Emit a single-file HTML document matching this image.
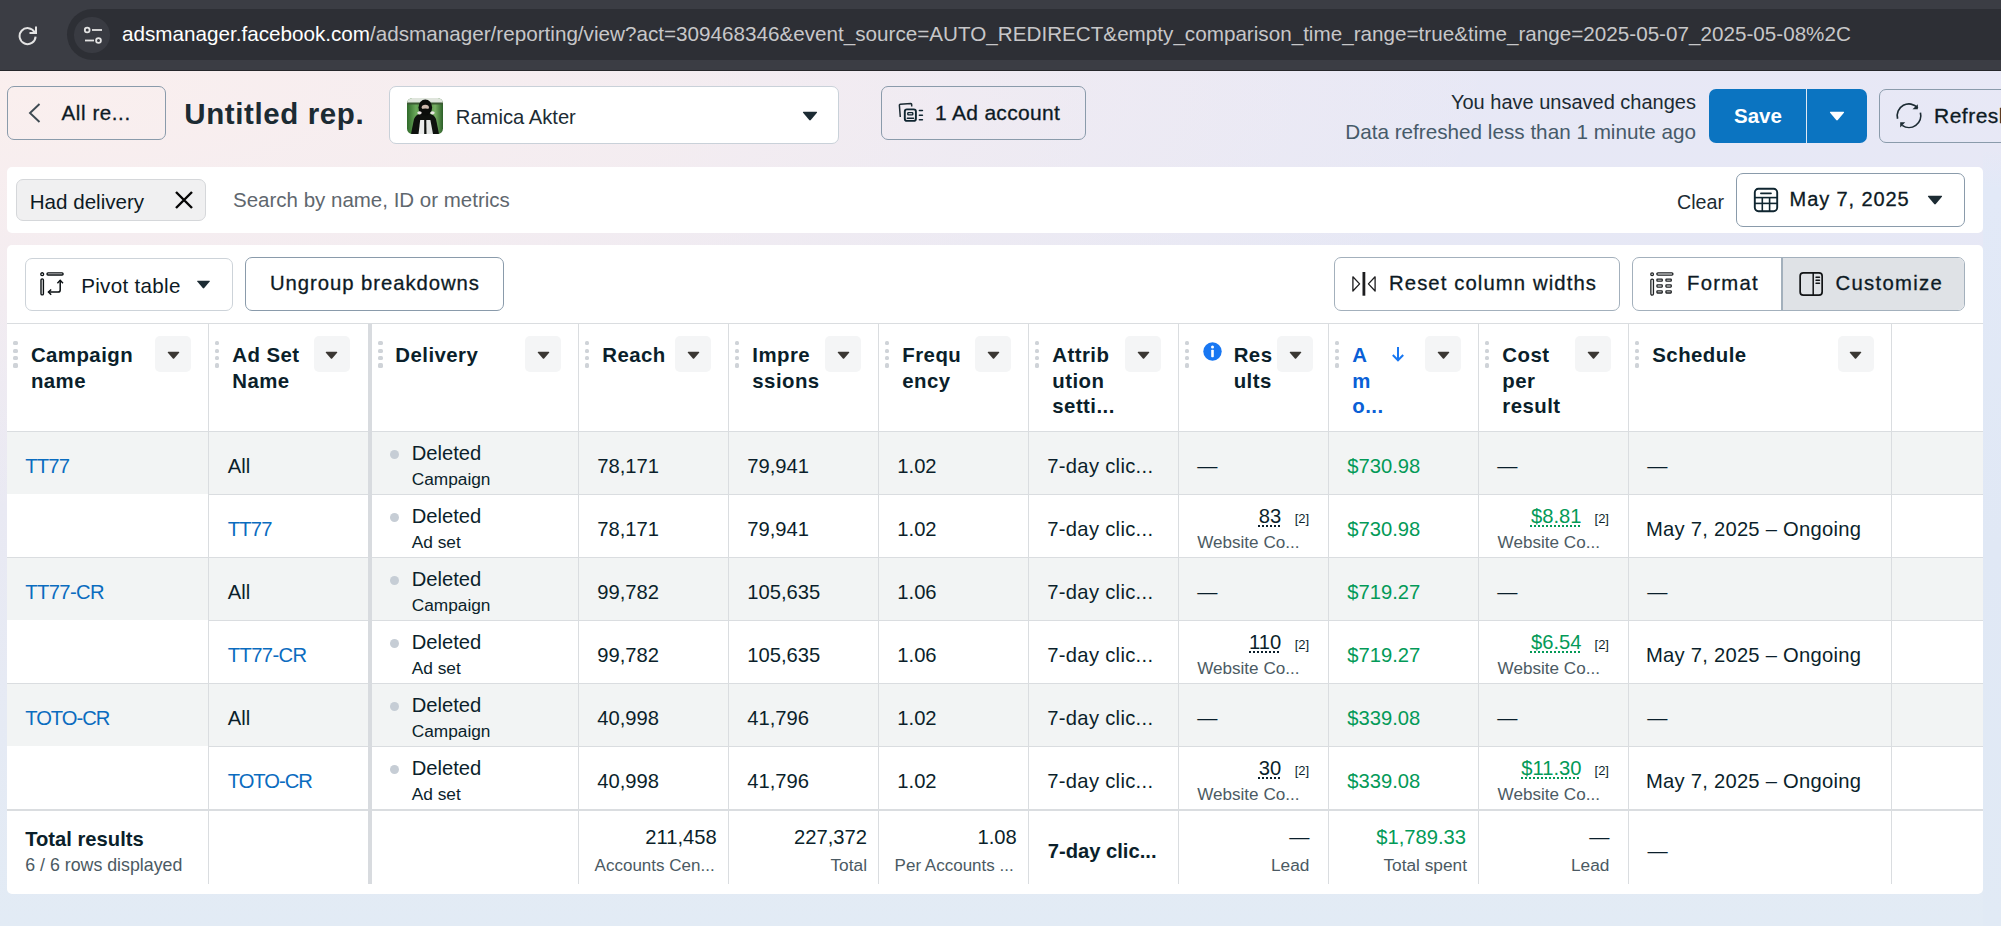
<!DOCTYPE html><html><head><meta charset="utf-8"><style>
html,body{margin:0;padding:0;width:2001px;height:926px;overflow:hidden;}
body{position:relative;font-family:"Liberation Sans",sans-serif;
background:
 radial-gradient(ellipse 1500px 420px at 0px 90px, rgba(250,239,238,1) 0%, rgba(248,238,239,0.75) 45%, rgba(246,237,240,0) 100%),
 linear-gradient(180deg, #e8e8f6 0px, #e6e8f5 300px, #e9e9f3 500px, #e2ebf5 926px);}
</style></head><body>
<div style="position:absolute;left:0px;top:0px;width:2001px;height:71px;box-sizing:border-box;background:#3b3d44;"></div>
<div style="position:absolute;left:0px;top:70px;width:2001px;height:1px;box-sizing:border-box;background:#26272b;"></div>
<div style="position:absolute;left:67px;top:9px;width:2001px;height:51px;box-sizing:border-box;background:#2d2f35;border-radius:26px;"></div>
<div style="position:absolute;left:74.3px;top:17px;width:35.5px;height:35.5px;box-sizing:border-box;background:#393b42;border-radius:50%;"></div>
<svg style="position:absolute;left:17px;top:24px" width="22" height="22" viewBox="0 0 22 22"><path d="M17.6 8.2 A8 8 0 1 0 18.6 12.6" fill="none" stroke="#e3e3e3" stroke-width="2"/><path d="M19 2.5 V9 H12.5" fill="none" stroke="#e3e3e3" stroke-width="2"/></svg>
<svg style="position:absolute;left:82.5px;top:25px" width="22" height="22" viewBox="0 0 22 22"><circle cx="4.2" cy="5" r="2.4" fill="none" stroke="#e3e3e3" stroke-width="1.8"/><line x1="9" y1="5" x2="19" y2="5" stroke="#e3e3e3" stroke-width="1.8"/><circle cx="15.5" cy="15.5" r="2.4" fill="none" stroke="#e3e3e3" stroke-width="1.8"/><line x1="2" y1="15.5" x2="11" y2="15.5" stroke="#e3e3e3" stroke-width="1.8"/></svg>
<div style="position:absolute;left:122px;top:21.04px;font-size:20.66px;line-height:26px;font-weight:400;color:#c7c7c9;white-space:nowrap;"><span style="color:#ffffff">adsmanager.facebook.com</span>/adsmanager/reporting/view?act=309468346&amp;event_source=AUTO_REDIRECT&amp;empty_comparison_time_range=true&amp;time_range=2025-05-07_2025-05-08%2C</div>
<div style="position:absolute;left:7px;top:86px;width:159px;height:54px;box-sizing:border-box;border:1px solid #8a9bab;border-radius:7px;"></div>
<svg style="position:absolute;left:27px;top:102px" width="16" height="22" viewBox="0 0 16 22"><polyline points="12.5,2 3,11 12.5,20" fill="none" stroke="#3e4a52" stroke-width="1.9"/></svg>
<div style="position:absolute;left:61.5px;top:99.90px;font-size:20.5px;line-height:26px;font-weight:400;color:#0d1a24;white-space:nowrap;letter-spacing:0.6px;-webkit-text-stroke:0.3px #0d1a24;">All re...</div>
<div style="position:absolute;left:184.3px;top:95.28px;font-size:29.5px;line-height:37px;font-weight:700;color:#1c2b33;white-space:nowrap;letter-spacing:0.6px;">Untitled rep.</div>
<div style="position:absolute;left:389px;top:86px;width:450px;height:58px;box-sizing:border-box;background:#fff;border:1px solid #c9d1d9;border-radius:7px;"></div>
<svg style="position:absolute;left:407px;top:98px" width="36" height="36" viewBox="0 0 36 36"><defs><clipPath id="av"><rect width="36" height="36" rx="5.5"/></clipPath><linearGradient id="gbg" x1="0" x2="1" y1="0" y2="0"><stop offset="0" stop-color="#2f6a2a"/><stop offset="0.25" stop-color="#6aa85a"/><stop offset="0.5" stop-color="#3f7a36"/><stop offset="0.78" stop-color="#78b064"/><stop offset="1" stop-color="#2c5f28"/></linearGradient></defs><g clip-path="url(#av)"><rect width="36" height="36" fill="url(#gbg)"/><rect y="0" width="36" height="5" fill="#dfe5dc"/><rect y="4.5" width="36" height="2" fill="#3d5a34"/><path d="M4 36 L7 21 Q9 16.5 13 16 L23 16 Q27 16.5 29 21 L32 36Z" fill="#0e110e"/><ellipse cx="18.3" cy="9.5" rx="6.8" ry="8" fill="#0b0d0b"/><ellipse cx="18.3" cy="9.3" rx="3.6" ry="2.6" fill="#cdb9ad"/><path d="M14 11 Q18.3 10 22.6 11 L22 15 L14.6 15Z" fill="#0b0d0b"/><ellipse cx="12.5" cy="14.8" rx="2.2" ry="1.6" fill="#e9e4e2"/><ellipse cx="25.5" cy="14.8" rx="2.2" ry="1.6" fill="#e9e4e2"/><path d="M11.5 36 L13.2 22 L17.2 22 L17.2 36Z" fill="#ecedec"/><path d="M19.3 22 L23.4 22 L26 36 L19.5 36Z" fill="#e4e6e4"/></g></svg>
<div style="position:absolute;left:455.8px;top:105.20px;font-size:20.2px;line-height:25px;font-weight:400;color:#1c2b33;white-space:nowrap;">Ramica Akter</div>
<svg style="position:absolute;left:802px;top:111px" width="16" height="10" viewBox="0 0 16 10"><path d="M1.5 0.8 H14.5 Q15.6 0.8 14.9 1.8 L8.8 9 Q8 9.8 7.2 9 L1.1 1.8 Q0.4 0.8 1.5 0.8Z" fill="#1c2b33"/></svg>
<div style="position:absolute;left:881px;top:86px;width:205px;height:54px;box-sizing:border-box;border:1px solid #8a9bab;border-radius:7px;"></div>
<svg style="position:absolute;left:894px;top:96px" width="36" height="32" viewBox="0 0 36 32"><path d="M6.3 21 L5.4 9.4 Q5.3 8.4 6.3 8.3 L16.8 7.6 Q17.7 7.6 17.7 8.5 V10.4" fill="none" stroke="#1c2b33" stroke-width="1.5"/><rect x="10.8" y="13.4" width="11.1" height="11.5" rx="2.2" fill="none" stroke="#0f2530" stroke-width="1.9"/><rect x="13.8" y="16.6" width="5" height="2.3" rx="0.6" fill="none" stroke="#0f2530" stroke-width="1.4"/><line x1="13.3" y1="22.3" x2="19.6" y2="22.3" stroke="#0f2530" stroke-width="1.4" stroke-linecap="round"/><line x1="25.4" y1="14.5" x2="28.4" y2="14.5" stroke="#0f2530" stroke-width="1.6" stroke-linecap="round"/><line x1="25.4" y1="19.3" x2="28.4" y2="19.3" stroke="#0f2530" stroke-width="1.6" stroke-linecap="round"/><line x1="25.4" y1="23.7" x2="28.4" y2="23.7" stroke="#0f2530" stroke-width="1.6" stroke-linecap="round"/></svg>
<div style="position:absolute;left:935px;top:99.92px;font-size:21px;line-height:26px;font-weight:400;color:#0d1a24;white-space:nowrap;letter-spacing:0.3px;-webkit-text-stroke:0.3px #0d1a24;">1 Ad account</div>
<div style="position:absolute;right:305px;top:90.27px;font-size:20px;line-height:25px;font-weight:400;color:#1c2b33;white-space:nowrap;">You have unsaved changes</div>
<div style="position:absolute;right:305px;top:119.33px;font-size:20.7px;line-height:26px;font-weight:400;color:#465a69;white-space:nowrap;">Data refreshed less than 1 minute ago</div>
<div style="position:absolute;left:1709px;top:89px;width:158px;height:54px;box-sizing:border-box;background:#0b74c1;border-radius:7px;"></div>
<div style="position:absolute;left:1806px;top:89px;width:1px;height:54px;box-sizing:border-box;background:#dfe9f3;"></div>
<div style="position:absolute;left:1734px;top:102.70px;font-size:20.5px;line-height:26px;font-weight:700;color:#fff;white-space:nowrap;">Save</div>
<svg style="position:absolute;left:1829px;top:111px" width="16" height="10" viewBox="0 0 16 10"><path d="M1.5 0.8 H14.5 Q15.6 0.8 14.9 1.8 L8.8 9 Q8 9.8 7.2 9 L1.1 1.8 Q0.4 0.8 1.5 0.8Z" fill="#fff"/></svg>
<div style="position:absolute;left:1879px;top:89px;width:200px;height:54px;box-sizing:border-box;border:1px solid #8a9bab;border-radius:7px;"></div>
<svg style="position:absolute;left:1890px;top:96px" width="40" height="40" viewBox="0 0 40 40"><path d="M7.60 22.75 A11.8 11.8 0 0 1 27.77 11.80" fill="none" stroke="#1c2b33" stroke-width="1.7"/><path d="M27.8 8.2 L27.8 13.3 L22.5 13.3Z" fill="#1c2b33"/><path d="M30.40 16.65 A11.8 11.8 0 0 1 12.23 29.37" fill="none" stroke="#1c2b33" stroke-width="1.7"/><path d="M10.2 26.2 L10.2 31.6 L15.2 26.2Z" fill="#1c2b33"/></svg>
<div style="position:absolute;left:1934px;top:102.52px;font-size:21px;line-height:26px;font-weight:400;color:#0d1a24;white-space:nowrap;letter-spacing:0.5px;-webkit-text-stroke:0.3px #0d1a24;">Refresh</div>
<div style="position:absolute;left:1983px;top:150px;width:18px;height:776px;box-sizing:border-box;background:linear-gradient(180deg, rgba(228,234,248,0) 0px, rgba(226,233,247,1) 40px, #e0e8f5 400px, #e1eaf5 776px);"></div>
<div style="position:absolute;left:7px;top:167px;width:1976px;height:66px;box-sizing:border-box;background:#fff;border-radius:5px;"></div>
<div style="position:absolute;left:16px;top:179px;width:190px;height:42px;box-sizing:border-box;background:#f0f0f1;border:1px solid #d5d7da;border-radius:7px;"></div>
<div style="position:absolute;left:29.7px;top:189.36px;font-size:20.6px;line-height:26px;font-weight:400;color:#0d1a24;white-space:nowrap;">Had delivery</div>
<svg style="position:absolute;left:174px;top:190px" width="20" height="20" viewBox="0 0 20 20"><path d="M2 2 L18 18 M18 2 L2 18" stroke="#050505" stroke-width="2.4"/></svg>
<div style="position:absolute;left:233px;top:187.20px;font-size:20.5px;line-height:26px;font-weight:400;color:#5f676e;white-space:nowrap;">Search by name, ID or metrics</div>
<div style="position:absolute;left:1677px;top:189.67px;font-size:19.7px;line-height:25px;font-weight:400;color:#1c2b33;white-space:nowrap;">Clear</div>
<div style="position:absolute;left:1736px;top:173px;width:229px;height:54px;box-sizing:border-box;border:1px solid #8a9bab;border-radius:7px;"></div>
<svg style="position:absolute;left:1753px;top:187px" width="26" height="26" viewBox="0 0 26 26"><rect x="1.8" y="1.8" width="22.4" height="22.4" rx="3.6" fill="none" stroke="#0f2530" stroke-width="1.9"/><line x1="7.9" y1="6.3" x2="18" y2="6.3" stroke="#0f2530" stroke-width="1.7" stroke-linecap="round"/><line x1="2" y1="10.6" x2="24" y2="10.6" stroke="#0f2530" stroke-width="1.6"/><line x1="2" y1="16.4" x2="24" y2="16.4" stroke="#0f2530" stroke-width="1.6"/><line x1="9.3" y1="10.6" x2="9.3" y2="24" stroke="#0f2530" stroke-width="1.6"/><line x1="16.6" y1="10.6" x2="16.6" y2="24" stroke="#0f2530" stroke-width="1.6"/></svg>
<div style="position:absolute;left:1789.6px;top:186.87px;font-size:20px;line-height:25px;font-weight:400;color:#0d1a24;white-space:nowrap;letter-spacing:0.9px;-webkit-text-stroke:0.3px #0d1a24;">May 7, 2025</div>
<svg style="position:absolute;left:1927px;top:195px" width="16" height="10" viewBox="0 0 16 10"><path d="M1.5 0.8 H14.5 Q15.6 0.8 14.9 1.8 L8.8 9 Q8 9.8 7.2 9 L1.1 1.8 Q0.4 0.8 1.5 0.8Z" fill="#1c2b33"/></svg>
<div style="position:absolute;left:7px;top:245px;width:1976px;height:649px;box-sizing:border-box;background:#fff;border-radius:5px;"></div>
<div style="position:absolute;left:25px;top:258px;width:208px;height:53px;box-sizing:border-box;border:1px solid #cdd3d9;border-radius:7px;"></div>
<svg style="position:absolute;left:38px;top:271px" width="27" height="27" viewBox="0 0 27 27"><circle cx="4.2" cy="3.2" r="1.45" fill="none" stroke="#0a0f12" stroke-width="1.3"/><rect x="3.0" y="7.9" width="2.4" height="16" rx="1.2" fill="none" stroke="#0a0f12" stroke-width="1.4"/><rect x="9.0" y="1.9" width="16.1" height="2.1" rx="1" fill="none" stroke="#0a0f12" stroke-width="1.4"/><path d="M22.2 9.6 V19 Q22.2 21.1 20 21.1 H10.6" fill="none" stroke="#0a0f12" stroke-width="1.5"/><path d="M19.4 12.2 L22.2 9.3 L25 12.2" fill="none" stroke="#0a0f12" stroke-width="1.4"/><path d="M13.2 18.4 L10.4 21.1 L13.2 23.8" fill="none" stroke="#0a0f12" stroke-width="1.4"/></svg>
<div style="position:absolute;left:81.2px;top:272.56px;font-size:20.6px;line-height:26px;font-weight:400;color:#0d1a24;white-space:nowrap;letter-spacing:0.3px;">Pivot table</div>
<svg style="position:absolute;left:196px;top:280px" width="15" height="9" viewBox="0 0 16 10"><path d="M1.5 0.8 H14.5 Q15.6 0.8 14.9 1.8 L8.8 9 Q8 9.8 7.2 9 L1.1 1.8 Q0.4 0.8 1.5 0.8Z" fill="#1c2b33"/></svg>
<div style="position:absolute;left:245px;top:257px;width:259px;height:54px;box-sizing:border-box;border:1px solid #8a9bab;border-radius:7px;"></div>
<div style="position:absolute;left:270px;top:271.27px;font-size:20.3px;line-height:25px;font-weight:400;color:#0d1a24;white-space:nowrap;letter-spacing:0.95px;-webkit-text-stroke:0.3px #0d1a24;">Ungroup breakdowns</div>
<div style="position:absolute;left:1334px;top:257px;width:286px;height:54px;box-sizing:border-box;border:1px solid #a3b0bc;border-radius:7px;"></div>
<svg style="position:absolute;left:1351px;top:271px" width="26" height="26" viewBox="0 0 26 26"><path d="M1.9 5.8 L8.6 12.9 L1.9 20 Z" fill="none" stroke="#1d1d1f" stroke-width="1.3" stroke-linejoin="round"/><rect x="11.5" y="1" width="2.8" height="23.7" fill="#1d1d1f"/><path d="M24.1 5.8 L17.4 12.9 L24.1 20 Z" fill="none" stroke="#1d1d1f" stroke-width="1.3" stroke-linejoin="round"/></svg>
<div style="position:absolute;left:1389px;top:271.47px;font-size:20.3px;line-height:25px;font-weight:400;color:#0d1a24;white-space:nowrap;letter-spacing:1.1px;-webkit-text-stroke:0.3px #0d1a24;">Reset column widths</div>
<div style="position:absolute;left:1632px;top:257px;width:333px;height:54px;box-sizing:border-box;border:1px solid #a3b0bc;border-radius:7px;overflow:hidden;"></div>
<div style="position:absolute;left:1782px;top:258px;width:182px;height:52px;box-sizing:border-box;background:#dfe2e6;border-radius:0 6px 6px 0;"></div>
<div style="position:absolute;left:1781px;top:258px;width:1.5px;height:52px;box-sizing:border-box;background:#a3b0bc;"></div>
<svg style="position:absolute;left:1649px;top:271px" width="26" height="26" viewBox="0 0 26 26"><circle cx="3.1" cy="3.2" r="1.35" fill="none" stroke="#1f2224" stroke-width="1.3"/><rect x="1.85" y="8.05" width="2.6" height="16" rx="1.2" fill="none" stroke="#1f2224" stroke-width="1.3"/><rect x="7.85" y="1.85" width="16.1" height="2.3" rx="1.1" fill="none" stroke="#1f2224" stroke-width="1.3"/><rect x="7.95" y="8.05" width="5.3" height="2.15" rx="0.5" fill="none" stroke="#1f2224" stroke-width="1.3"/><rect x="16.95" y="8.05" width="5.3" height="2.15" rx="0.5" fill="none" stroke="#1f2224" stroke-width="1.3"/><rect x="7.95" y="13.95" width="5.3" height="2.15" rx="0.5" fill="none" stroke="#1f2224" stroke-width="1.3"/><rect x="16.95" y="13.95" width="5.3" height="2.15" rx="0.5" fill="none" stroke="#1f2224" stroke-width="1.3"/><rect x="7.95" y="19.85" width="5.3" height="2.15" rx="0.5" fill="none" stroke="#1f2224" stroke-width="1.3"/><rect x="16.95" y="19.85" width="5.3" height="2.15" rx="0.5" fill="none" stroke="#1f2224" stroke-width="1.3"/></svg>
<div style="position:absolute;left:1687px;top:271.17px;font-size:20.3px;line-height:25px;font-weight:400;color:#0d1a24;white-space:nowrap;letter-spacing:1.3px;-webkit-text-stroke:0.3px #0d1a24;">Format</div>
<svg style="position:absolute;left:1798px;top:271px" width="26" height="26" viewBox="0 0 26 26"><rect x="2.15" y="1.85" width="22" height="22.3" rx="3.2" fill="none" stroke="#121416" stroke-width="1.7"/><line x1="15.2" y1="1.8" x2="15.2" y2="24.2" stroke="#121416" stroke-width="1.5"/><line x1="18" y1="6.2" x2="21.5" y2="6.2" stroke="#121416" stroke-width="1.4" stroke-linecap="round"/><line x1="18" y1="9.2" x2="21.5" y2="9.2" stroke="#121416" stroke-width="1.4" stroke-linecap="round"/><line x1="18" y1="12.2" x2="21.5" y2="12.2" stroke="#121416" stroke-width="1.4" stroke-linecap="round"/></svg>
<div style="position:absolute;left:1835.6px;top:271.17px;font-size:20.3px;line-height:25px;font-weight:400;color:#0d1a24;white-space:nowrap;letter-spacing:1.3px;-webkit-text-stroke:0.3px #0d1a24;">Customize</div>
<div style="position:absolute;left:7px;top:432px;width:1976px;height:62px;box-sizing:border-box;background:#f2f4f4;"></div>
<div style="position:absolute;left:7px;top:558px;width:1976px;height:62px;box-sizing:border-box;background:#f2f4f4;"></div>
<div style="position:absolute;left:7px;top:684px;width:1976px;height:62px;box-sizing:border-box;background:#f2f4f4;"></div>
<div style="position:absolute;left:7px;top:323px;width:1976px;height:1px;box-sizing:border-box;background:#dadde0;"></div>
<div style="position:absolute;left:7px;top:431px;width:1976px;height:1px;box-sizing:border-box;background:#dadde0;"></div>
<div style="position:absolute;left:208px;top:494px;width:1775px;height:1px;box-sizing:border-box;background:#dadde0;"></div>
<div style="position:absolute;left:7px;top:557px;width:1976px;height:1px;box-sizing:border-box;background:#dadde0;"></div>
<div style="position:absolute;left:208px;top:620px;width:1775px;height:1px;box-sizing:border-box;background:#dadde0;"></div>
<div style="position:absolute;left:7px;top:683px;width:1976px;height:1px;box-sizing:border-box;background:#dadde0;"></div>
<div style="position:absolute;left:208px;top:746px;width:1775px;height:1px;box-sizing:border-box;background:#dadde0;"></div>
<div style="position:absolute;left:7px;top:809px;width:1976px;height:1px;box-sizing:border-box;background:#dadde0;"></div>
<div style="position:absolute;left:7px;top:809px;width:1976px;height:2px;box-sizing:border-box;background:#dadde0;"></div>
<div style="position:absolute;left:208px;top:324px;width:1px;height:560px;box-sizing:border-box;background:#dadde0;"></div>
<div style="position:absolute;left:578px;top:324px;width:1px;height:560px;box-sizing:border-box;background:#dadde0;"></div>
<div style="position:absolute;left:728px;top:324px;width:1px;height:560px;box-sizing:border-box;background:#dadde0;"></div>
<div style="position:absolute;left:878px;top:324px;width:1px;height:560px;box-sizing:border-box;background:#dadde0;"></div>
<div style="position:absolute;left:1028px;top:324px;width:1px;height:560px;box-sizing:border-box;background:#dadde0;"></div>
<div style="position:absolute;left:1178px;top:324px;width:1px;height:560px;box-sizing:border-box;background:#dadde0;"></div>
<div style="position:absolute;left:1328px;top:324px;width:1px;height:560px;box-sizing:border-box;background:#dadde0;"></div>
<div style="position:absolute;left:1478px;top:324px;width:1px;height:560px;box-sizing:border-box;background:#dadde0;"></div>
<div style="position:absolute;left:1628px;top:324px;width:1px;height:560px;box-sizing:border-box;background:#dadde0;"></div>
<div style="position:absolute;left:1891px;top:324px;width:1px;height:560px;box-sizing:border-box;background:#dadde0;"></div>
<div style="position:absolute;left:368px;top:324px;width:4px;height:560px;box-sizing:border-box;background:#d8dbdf;"></div>
<div style="position:absolute;left:13.2px;top:341.1px;width:4.4px;height:4.4px;background:#cfd3d8;border-radius:1.6px;"></div>
<div style="position:absolute;left:13.2px;top:348.5px;width:4.4px;height:4.4px;background:#cfd3d8;border-radius:1.6px;"></div>
<div style="position:absolute;left:13.2px;top:355.9px;width:4.4px;height:4.4px;background:#cfd3d8;border-radius:1.6px;"></div>
<div style="position:absolute;left:13.2px;top:363.3px;width:4.4px;height:4.4px;background:#cfd3d8;border-radius:1.6px;"></div>
<div style="position:absolute;left:155.2px;top:336px;width:36px;height:36px;box-sizing:border-box;background:#f4f5f6;border-radius:5px;"></div>
<svg style="position:absolute;left:166.7px;top:350.5px" width="13" height="8.5" viewBox="0 0 16 10"><path d="M1.5 0.8 H14.5 Q15.6 0.8 14.9 1.8 L8.8 9 Q8 9.8 7.2 9 L1.1 1.8 Q0.4 0.8 1.5 0.8Z" fill="#3a3733"/></svg>
<div style="position:absolute;left:30.9px;top:341.73px;font-size:20.4px;line-height:26px;font-weight:700;color:#0b1f2b;white-space:nowrap;letter-spacing:0.45px;">Campaign</div>
<div style="position:absolute;left:30.9px;top:367.53px;font-size:20.4px;line-height:26px;font-weight:700;color:#0b1f2b;white-space:nowrap;letter-spacing:0.45px;">name</div>
<div style="position:absolute;left:215px;top:341.1px;width:4.4px;height:4.4px;background:#cfd3d8;border-radius:1.6px;"></div>
<div style="position:absolute;left:215px;top:348.5px;width:4.4px;height:4.4px;background:#cfd3d8;border-radius:1.6px;"></div>
<div style="position:absolute;left:215px;top:355.9px;width:4.4px;height:4.4px;background:#cfd3d8;border-radius:1.6px;"></div>
<div style="position:absolute;left:215px;top:363.3px;width:4.4px;height:4.4px;background:#cfd3d8;border-radius:1.6px;"></div>
<div style="position:absolute;left:313.5px;top:336px;width:36px;height:36px;box-sizing:border-box;background:#f4f5f6;border-radius:5px;"></div>
<svg style="position:absolute;left:325.0px;top:350.5px" width="13" height="8.5" viewBox="0 0 16 10"><path d="M1.5 0.8 H14.5 Q15.6 0.8 14.9 1.8 L8.8 9 Q8 9.8 7.2 9 L1.1 1.8 Q0.4 0.8 1.5 0.8Z" fill="#3a3733"/></svg>
<div style="position:absolute;left:232.3px;top:341.73px;font-size:20.4px;line-height:26px;font-weight:700;color:#0b1f2b;white-space:nowrap;letter-spacing:0.45px;">Ad Set</div>
<div style="position:absolute;left:232.3px;top:367.53px;font-size:20.4px;line-height:26px;font-weight:700;color:#0b1f2b;white-space:nowrap;letter-spacing:0.45px;">Name</div>
<div style="position:absolute;left:378.3px;top:341.1px;width:4.4px;height:4.4px;background:#cfd3d8;border-radius:1.6px;"></div>
<div style="position:absolute;left:378.3px;top:348.5px;width:4.4px;height:4.4px;background:#cfd3d8;border-radius:1.6px;"></div>
<div style="position:absolute;left:378.3px;top:355.9px;width:4.4px;height:4.4px;background:#cfd3d8;border-radius:1.6px;"></div>
<div style="position:absolute;left:378.3px;top:363.3px;width:4.4px;height:4.4px;background:#cfd3d8;border-radius:1.6px;"></div>
<div style="position:absolute;left:525px;top:336px;width:36px;height:36px;box-sizing:border-box;background:#f4f5f6;border-radius:5px;"></div>
<svg style="position:absolute;left:536.5px;top:350.5px" width="13" height="8.5" viewBox="0 0 16 10"><path d="M1.5 0.8 H14.5 Q15.6 0.8 14.9 1.8 L8.8 9 Q8 9.8 7.2 9 L1.1 1.8 Q0.4 0.8 1.5 0.8Z" fill="#3a3733"/></svg>
<div style="position:absolute;left:395.3px;top:341.73px;font-size:20.4px;line-height:26px;font-weight:700;color:#0b1f2b;white-space:nowrap;letter-spacing:0.45px;">Delivery</div>
<div style="position:absolute;left:585px;top:341.1px;width:4.4px;height:4.4px;background:#cfd3d8;border-radius:1.6px;"></div>
<div style="position:absolute;left:585px;top:348.5px;width:4.4px;height:4.4px;background:#cfd3d8;border-radius:1.6px;"></div>
<div style="position:absolute;left:585px;top:355.9px;width:4.4px;height:4.4px;background:#cfd3d8;border-radius:1.6px;"></div>
<div style="position:absolute;left:585px;top:363.3px;width:4.4px;height:4.4px;background:#cfd3d8;border-radius:1.6px;"></div>
<div style="position:absolute;left:675px;top:336px;width:36px;height:36px;box-sizing:border-box;background:#f4f5f6;border-radius:5px;"></div>
<svg style="position:absolute;left:686.5px;top:350.5px" width="13" height="8.5" viewBox="0 0 16 10"><path d="M1.5 0.8 H14.5 Q15.6 0.8 14.9 1.8 L8.8 9 Q8 9.8 7.2 9 L1.1 1.8 Q0.4 0.8 1.5 0.8Z" fill="#3a3733"/></svg>
<div style="position:absolute;left:602.3px;top:341.73px;font-size:20.4px;line-height:26px;font-weight:700;color:#0b1f2b;white-space:nowrap;letter-spacing:0.45px;">Reach</div>
<div style="position:absolute;left:735px;top:341.1px;width:4.4px;height:4.4px;background:#cfd3d8;border-radius:1.6px;"></div>
<div style="position:absolute;left:735px;top:348.5px;width:4.4px;height:4.4px;background:#cfd3d8;border-radius:1.6px;"></div>
<div style="position:absolute;left:735px;top:355.9px;width:4.4px;height:4.4px;background:#cfd3d8;border-radius:1.6px;"></div>
<div style="position:absolute;left:735px;top:363.3px;width:4.4px;height:4.4px;background:#cfd3d8;border-radius:1.6px;"></div>
<div style="position:absolute;left:825px;top:336px;width:36px;height:36px;box-sizing:border-box;background:#f4f5f6;border-radius:5px;"></div>
<svg style="position:absolute;left:836.5px;top:350.5px" width="13" height="8.5" viewBox="0 0 16 10"><path d="M1.5 0.8 H14.5 Q15.6 0.8 14.9 1.8 L8.8 9 Q8 9.8 7.2 9 L1.1 1.8 Q0.4 0.8 1.5 0.8Z" fill="#3a3733"/></svg>
<div style="position:absolute;left:752.3px;top:341.73px;font-size:20.4px;line-height:26px;font-weight:700;color:#0b1f2b;white-space:nowrap;letter-spacing:0.45px;">Impre</div>
<div style="position:absolute;left:752.3px;top:367.53px;font-size:20.4px;line-height:26px;font-weight:700;color:#0b1f2b;white-space:nowrap;letter-spacing:0.45px;">ssions</div>
<div style="position:absolute;left:885px;top:341.1px;width:4.4px;height:4.4px;background:#cfd3d8;border-radius:1.6px;"></div>
<div style="position:absolute;left:885px;top:348.5px;width:4.4px;height:4.4px;background:#cfd3d8;border-radius:1.6px;"></div>
<div style="position:absolute;left:885px;top:355.9px;width:4.4px;height:4.4px;background:#cfd3d8;border-radius:1.6px;"></div>
<div style="position:absolute;left:885px;top:363.3px;width:4.4px;height:4.4px;background:#cfd3d8;border-radius:1.6px;"></div>
<div style="position:absolute;left:975px;top:336px;width:36px;height:36px;box-sizing:border-box;background:#f4f5f6;border-radius:5px;"></div>
<svg style="position:absolute;left:986.5px;top:350.5px" width="13" height="8.5" viewBox="0 0 16 10"><path d="M1.5 0.8 H14.5 Q15.6 0.8 14.9 1.8 L8.8 9 Q8 9.8 7.2 9 L1.1 1.8 Q0.4 0.8 1.5 0.8Z" fill="#3a3733"/></svg>
<div style="position:absolute;left:902.3px;top:341.73px;font-size:20.4px;line-height:26px;font-weight:700;color:#0b1f2b;white-space:nowrap;letter-spacing:0.45px;">Frequ</div>
<div style="position:absolute;left:902.3px;top:367.53px;font-size:20.4px;line-height:26px;font-weight:700;color:#0b1f2b;white-space:nowrap;letter-spacing:0.45px;">ency</div>
<div style="position:absolute;left:1035px;top:341.1px;width:4.4px;height:4.4px;background:#cfd3d8;border-radius:1.6px;"></div>
<div style="position:absolute;left:1035px;top:348.5px;width:4.4px;height:4.4px;background:#cfd3d8;border-radius:1.6px;"></div>
<div style="position:absolute;left:1035px;top:355.9px;width:4.4px;height:4.4px;background:#cfd3d8;border-radius:1.6px;"></div>
<div style="position:absolute;left:1035px;top:363.3px;width:4.4px;height:4.4px;background:#cfd3d8;border-radius:1.6px;"></div>
<div style="position:absolute;left:1125px;top:336px;width:36px;height:36px;box-sizing:border-box;background:#f4f5f6;border-radius:5px;"></div>
<svg style="position:absolute;left:1136.5px;top:350.5px" width="13" height="8.5" viewBox="0 0 16 10"><path d="M1.5 0.8 H14.5 Q15.6 0.8 14.9 1.8 L8.8 9 Q8 9.8 7.2 9 L1.1 1.8 Q0.4 0.8 1.5 0.8Z" fill="#3a3733"/></svg>
<div style="position:absolute;left:1052.3px;top:341.73px;font-size:20.4px;line-height:26px;font-weight:700;color:#0b1f2b;white-space:nowrap;letter-spacing:0.45px;">Attrib</div>
<div style="position:absolute;left:1052.3px;top:367.53px;font-size:20.4px;line-height:26px;font-weight:700;color:#0b1f2b;white-space:nowrap;letter-spacing:0.45px;">ution</div>
<div style="position:absolute;left:1052.3px;top:393.33px;font-size:20.4px;line-height:26px;font-weight:700;color:#0b1f2b;white-space:nowrap;letter-spacing:0.45px;">setti...</div>
<div style="position:absolute;left:1185px;top:341.1px;width:4.4px;height:4.4px;background:#cfd3d8;border-radius:1.6px;"></div>
<div style="position:absolute;left:1185px;top:348.5px;width:4.4px;height:4.4px;background:#cfd3d8;border-radius:1.6px;"></div>
<div style="position:absolute;left:1185px;top:355.9px;width:4.4px;height:4.4px;background:#cfd3d8;border-radius:1.6px;"></div>
<div style="position:absolute;left:1185px;top:363.3px;width:4.4px;height:4.4px;background:#cfd3d8;border-radius:1.6px;"></div>
<div style="position:absolute;left:1277px;top:336px;width:36px;height:36px;box-sizing:border-box;background:#f4f5f6;border-radius:5px;"></div>
<svg style="position:absolute;left:1288.5px;top:350.5px" width="13" height="8.5" viewBox="0 0 16 10"><path d="M1.5 0.8 H14.5 Q15.6 0.8 14.9 1.8 L8.8 9 Q8 9.8 7.2 9 L1.1 1.8 Q0.4 0.8 1.5 0.8Z" fill="#3a3733"/></svg>
<div style="position:absolute;left:1233.7px;top:341.73px;font-size:20.4px;line-height:26px;font-weight:700;color:#0b1f2b;white-space:nowrap;letter-spacing:0.45px;">Res</div>
<div style="position:absolute;left:1233.7px;top:367.53px;font-size:20.4px;line-height:26px;font-weight:700;color:#0b1f2b;white-space:nowrap;letter-spacing:0.45px;">ults</div>
<div style="position:absolute;left:1335px;top:341.1px;width:4.4px;height:4.4px;background:#cfd3d8;border-radius:1.6px;"></div>
<div style="position:absolute;left:1335px;top:348.5px;width:4.4px;height:4.4px;background:#cfd3d8;border-radius:1.6px;"></div>
<div style="position:absolute;left:1335px;top:355.9px;width:4.4px;height:4.4px;background:#cfd3d8;border-radius:1.6px;"></div>
<div style="position:absolute;left:1335px;top:363.3px;width:4.4px;height:4.4px;background:#cfd3d8;border-radius:1.6px;"></div>
<div style="position:absolute;left:1425px;top:336px;width:36px;height:36px;box-sizing:border-box;background:#f4f5f6;border-radius:5px;"></div>
<svg style="position:absolute;left:1436.5px;top:350.5px" width="13" height="8.5" viewBox="0 0 16 10"><path d="M1.5 0.8 H14.5 Q15.6 0.8 14.9 1.8 L8.8 9 Q8 9.8 7.2 9 L1.1 1.8 Q0.4 0.8 1.5 0.8Z" fill="#3a3733"/></svg>
<div style="position:absolute;left:1352.3px;top:341.73px;font-size:20.4px;line-height:26px;font-weight:700;color:#0a5fd6;white-space:nowrap;letter-spacing:0.45px;">A</div>
<div style="position:absolute;left:1352.3px;top:367.53px;font-size:20.4px;line-height:26px;font-weight:700;color:#0a5fd6;white-space:nowrap;letter-spacing:0.45px;">m</div>
<div style="position:absolute;left:1352.3px;top:393.33px;font-size:20.4px;line-height:26px;font-weight:700;color:#0a5fd6;white-space:nowrap;letter-spacing:0.45px;">o...</div>
<div style="position:absolute;left:1485px;top:341.1px;width:4.4px;height:4.4px;background:#cfd3d8;border-radius:1.6px;"></div>
<div style="position:absolute;left:1485px;top:348.5px;width:4.4px;height:4.4px;background:#cfd3d8;border-radius:1.6px;"></div>
<div style="position:absolute;left:1485px;top:355.9px;width:4.4px;height:4.4px;background:#cfd3d8;border-radius:1.6px;"></div>
<div style="position:absolute;left:1485px;top:363.3px;width:4.4px;height:4.4px;background:#cfd3d8;border-radius:1.6px;"></div>
<div style="position:absolute;left:1575px;top:336px;width:36px;height:36px;box-sizing:border-box;background:#f4f5f6;border-radius:5px;"></div>
<svg style="position:absolute;left:1586.5px;top:350.5px" width="13" height="8.5" viewBox="0 0 16 10"><path d="M1.5 0.8 H14.5 Q15.6 0.8 14.9 1.8 L8.8 9 Q8 9.8 7.2 9 L1.1 1.8 Q0.4 0.8 1.5 0.8Z" fill="#3a3733"/></svg>
<div style="position:absolute;left:1502.3px;top:341.73px;font-size:20.4px;line-height:26px;font-weight:700;color:#0b1f2b;white-space:nowrap;letter-spacing:0.45px;">Cost</div>
<div style="position:absolute;left:1502.3px;top:367.53px;font-size:20.4px;line-height:26px;font-weight:700;color:#0b1f2b;white-space:nowrap;letter-spacing:0.45px;">per</div>
<div style="position:absolute;left:1502.3px;top:393.33px;font-size:20.4px;line-height:26px;font-weight:700;color:#0b1f2b;white-space:nowrap;letter-spacing:0.45px;">result</div>
<div style="position:absolute;left:1635px;top:341.1px;width:4.4px;height:4.4px;background:#cfd3d8;border-radius:1.6px;"></div>
<div style="position:absolute;left:1635px;top:348.5px;width:4.4px;height:4.4px;background:#cfd3d8;border-radius:1.6px;"></div>
<div style="position:absolute;left:1635px;top:355.9px;width:4.4px;height:4.4px;background:#cfd3d8;border-radius:1.6px;"></div>
<div style="position:absolute;left:1635px;top:363.3px;width:4.4px;height:4.4px;background:#cfd3d8;border-radius:1.6px;"></div>
<div style="position:absolute;left:1837.5px;top:336px;width:36px;height:36px;box-sizing:border-box;background:#f4f5f6;border-radius:5px;"></div>
<svg style="position:absolute;left:1849.0px;top:350.5px" width="13" height="8.5" viewBox="0 0 16 10"><path d="M1.5 0.8 H14.5 Q15.6 0.8 14.9 1.8 L8.8 9 Q8 9.8 7.2 9 L1.1 1.8 Q0.4 0.8 1.5 0.8Z" fill="#3a3733"/></svg>
<div style="position:absolute;left:1652.3px;top:341.73px;font-size:20.4px;line-height:26px;font-weight:700;color:#0b1f2b;white-space:nowrap;letter-spacing:0.45px;">Schedule</div>
<svg style="position:absolute;left:1202.5px;top:341.5px" width="19" height="19" viewBox="0 0 19 19"><circle cx="9.5" cy="9.5" r="9.2" fill="#1877f2"/><circle cx="9.5" cy="5" r="1.5" fill="#fff"/><rect x="8.2" y="7.8" width="2.6" height="7.5" rx="0.8" fill="#fff"/></svg>
<svg style="position:absolute;left:1391px;top:346px" width="14" height="16" viewBox="0 0 14 16"><line x1="7" y1="1" x2="7" y2="14" stroke="#1877f2" stroke-width="2"/><polyline points="1.8,9 7,14.3 12.2,9" fill="none" stroke="#1877f2" stroke-width="2"/></svg>
<div style="position:absolute;left:25.2px;top:454.00px;font-size:20.2px;line-height:25px;font-weight:400;color:#0b6cbf;white-space:nowrap;letter-spacing:-0.75px;">TT77</div>
<div style="position:absolute;left:227.7px;top:454.00px;font-size:20.2px;line-height:25px;font-weight:400;color:#0b1f2b;white-space:nowrap;">All</div>
<div style="position:absolute;left:390px;top:449.8px;width:9px;height:9px;box-sizing:border-box;background:#c6cdd5;border-radius:50%;"></div>
<div style="position:absolute;left:411.7px;top:440.80px;font-size:20.2px;line-height:25px;font-weight:400;color:#0b1f2b;white-space:nowrap;">Deleted</div>
<div style="position:absolute;left:411.7px;top:468.01px;font-size:17.3px;line-height:22px;font-weight:400;color:#0b1f2b;white-space:nowrap;">Campaign</div>
<div style="position:absolute;left:597.3px;top:454.00px;font-size:20.2px;line-height:25px;font-weight:400;color:#0b1f2b;white-space:nowrap;">78,171</div>
<div style="position:absolute;left:747.3px;top:454.00px;font-size:20.2px;line-height:25px;font-weight:400;color:#0b1f2b;white-space:nowrap;">79,941</div>
<div style="position:absolute;left:897.3px;top:454.00px;font-size:20.2px;line-height:25px;font-weight:400;color:#0b1f2b;white-space:nowrap;">1.02</div>
<div style="position:absolute;left:1047.3px;top:454.00px;font-size:20.2px;line-height:25px;font-weight:400;color:#0b1f2b;white-space:nowrap;letter-spacing:0.3px;">7-day clic...</div>
<div style="position:absolute;left:1197.3px;top:454.00px;font-size:20.2px;line-height:25px;font-weight:400;color:#0b1f2b;white-space:nowrap;">—</div>
<div style="position:absolute;left:1347.3px;top:454.00px;font-size:20.2px;line-height:25px;font-weight:400;color:#039a58;white-space:nowrap;">$730.98</div>
<div style="position:absolute;left:1497.3px;top:454.00px;font-size:20.2px;line-height:25px;font-weight:400;color:#0b1f2b;white-space:nowrap;">—</div>
<div style="position:absolute;left:1647.3px;top:454.00px;font-size:20.2px;line-height:25px;font-weight:400;color:#0b1f2b;white-space:nowrap;">—</div>
<div style="position:absolute;left:227.7px;top:517.00px;font-size:20.2px;line-height:25px;font-weight:400;color:#0b6cbf;white-space:nowrap;letter-spacing:-0.75px;">TT77</div>
<div style="position:absolute;left:390px;top:512.8px;width:9px;height:9px;box-sizing:border-box;background:#c6cdd5;border-radius:50%;"></div>
<div style="position:absolute;left:411.7px;top:503.80px;font-size:20.2px;line-height:25px;font-weight:400;color:#0b1f2b;white-space:nowrap;">Deleted</div>
<div style="position:absolute;left:411.7px;top:531.01px;font-size:17.3px;line-height:22px;font-weight:400;color:#0b1f2b;white-space:nowrap;">Ad set</div>
<div style="position:absolute;left:597.3px;top:517.00px;font-size:20.2px;line-height:25px;font-weight:400;color:#0b1f2b;white-space:nowrap;">78,171</div>
<div style="position:absolute;left:747.3px;top:517.00px;font-size:20.2px;line-height:25px;font-weight:400;color:#0b1f2b;white-space:nowrap;">79,941</div>
<div style="position:absolute;left:897.3px;top:517.00px;font-size:20.2px;line-height:25px;font-weight:400;color:#0b1f2b;white-space:nowrap;">1.02</div>
<div style="position:absolute;left:1047.3px;top:517.00px;font-size:20.2px;line-height:25px;font-weight:400;color:#0b1f2b;white-space:nowrap;letter-spacing:0.3px;">7-day clic...</div>
<div style="position:absolute;right:719.8px;top:504.10px;font-size:20.2px;line-height:25px;font-weight:400;color:#0b1f2b;white-space:nowrap;text-decoration:underline dotted;text-underline-offset:2px;text-decoration-thickness:1.5px;">83</div>
<div style="position:absolute;right:691.8px;top:511.00px;font-size:13px;line-height:16px;font-weight:400;color:#0b1f2b;white-space:nowrap;">[2]</div>
<div style="position:absolute;left:1197.2px;top:531.57px;font-size:17.1px;line-height:21px;font-weight:400;color:#4b5a63;white-space:nowrap;">Website Co...</div>
<div style="position:absolute;left:1347.3px;top:517.00px;font-size:20.2px;line-height:25px;font-weight:400;color:#039a58;white-space:nowrap;">$730.98</div>
<div style="position:absolute;right:419.5px;top:504.10px;font-size:20.2px;line-height:25px;font-weight:400;color:#039a58;white-space:nowrap;text-decoration:underline dotted;text-underline-offset:2px;text-decoration-thickness:1.5px;">$8.81</div>
<div style="position:absolute;right:392px;top:511.00px;font-size:13px;line-height:16px;font-weight:400;color:#0b1f2b;white-space:nowrap;">[2]</div>
<div style="position:absolute;left:1497.6px;top:531.57px;font-size:17.1px;line-height:21px;font-weight:400;color:#4b5a63;white-space:nowrap;">Website Co...</div>
<div style="position:absolute;left:1646px;top:517.00px;font-size:20.2px;line-height:25px;font-weight:400;color:#0b1f2b;white-space:nowrap;letter-spacing:0.25px;">May 7, 2025 – Ongoing</div>
<div style="position:absolute;left:25.2px;top:580.00px;font-size:20.2px;line-height:25px;font-weight:400;color:#0b6cbf;white-space:nowrap;letter-spacing:-0.6px;">TT77-CR</div>
<div style="position:absolute;left:227.7px;top:580.00px;font-size:20.2px;line-height:25px;font-weight:400;color:#0b1f2b;white-space:nowrap;">All</div>
<div style="position:absolute;left:390px;top:575.8px;width:9px;height:9px;box-sizing:border-box;background:#c6cdd5;border-radius:50%;"></div>
<div style="position:absolute;left:411.7px;top:566.80px;font-size:20.2px;line-height:25px;font-weight:400;color:#0b1f2b;white-space:nowrap;">Deleted</div>
<div style="position:absolute;left:411.7px;top:594.01px;font-size:17.3px;line-height:22px;font-weight:400;color:#0b1f2b;white-space:nowrap;">Campaign</div>
<div style="position:absolute;left:597.3px;top:580.00px;font-size:20.2px;line-height:25px;font-weight:400;color:#0b1f2b;white-space:nowrap;">99,782</div>
<div style="position:absolute;left:747.3px;top:580.00px;font-size:20.2px;line-height:25px;font-weight:400;color:#0b1f2b;white-space:nowrap;">105,635</div>
<div style="position:absolute;left:897.3px;top:580.00px;font-size:20.2px;line-height:25px;font-weight:400;color:#0b1f2b;white-space:nowrap;">1.06</div>
<div style="position:absolute;left:1047.3px;top:580.00px;font-size:20.2px;line-height:25px;font-weight:400;color:#0b1f2b;white-space:nowrap;letter-spacing:0.3px;">7-day clic...</div>
<div style="position:absolute;left:1197.3px;top:580.00px;font-size:20.2px;line-height:25px;font-weight:400;color:#0b1f2b;white-space:nowrap;">—</div>
<div style="position:absolute;left:1347.3px;top:580.00px;font-size:20.2px;line-height:25px;font-weight:400;color:#039a58;white-space:nowrap;">$719.27</div>
<div style="position:absolute;left:1497.3px;top:580.00px;font-size:20.2px;line-height:25px;font-weight:400;color:#0b1f2b;white-space:nowrap;">—</div>
<div style="position:absolute;left:1647.3px;top:580.00px;font-size:20.2px;line-height:25px;font-weight:400;color:#0b1f2b;white-space:nowrap;">—</div>
<div style="position:absolute;left:227.7px;top:643.00px;font-size:20.2px;line-height:25px;font-weight:400;color:#0b6cbf;white-space:nowrap;letter-spacing:-0.6px;">TT77-CR</div>
<div style="position:absolute;left:390px;top:638.8px;width:9px;height:9px;box-sizing:border-box;background:#c6cdd5;border-radius:50%;"></div>
<div style="position:absolute;left:411.7px;top:629.80px;font-size:20.2px;line-height:25px;font-weight:400;color:#0b1f2b;white-space:nowrap;">Deleted</div>
<div style="position:absolute;left:411.7px;top:657.01px;font-size:17.3px;line-height:22px;font-weight:400;color:#0b1f2b;white-space:nowrap;">Ad set</div>
<div style="position:absolute;left:597.3px;top:643.00px;font-size:20.2px;line-height:25px;font-weight:400;color:#0b1f2b;white-space:nowrap;">99,782</div>
<div style="position:absolute;left:747.3px;top:643.00px;font-size:20.2px;line-height:25px;font-weight:400;color:#0b1f2b;white-space:nowrap;">105,635</div>
<div style="position:absolute;left:897.3px;top:643.00px;font-size:20.2px;line-height:25px;font-weight:400;color:#0b1f2b;white-space:nowrap;">1.06</div>
<div style="position:absolute;left:1047.3px;top:643.00px;font-size:20.2px;line-height:25px;font-weight:400;color:#0b1f2b;white-space:nowrap;letter-spacing:0.3px;">7-day clic...</div>
<div style="position:absolute;right:719.8px;top:630.10px;font-size:20.2px;line-height:25px;font-weight:400;color:#0b1f2b;white-space:nowrap;text-decoration:underline dotted;text-underline-offset:2px;text-decoration-thickness:1.5px;">110</div>
<div style="position:absolute;right:691.8px;top:637.00px;font-size:13px;line-height:16px;font-weight:400;color:#0b1f2b;white-space:nowrap;">[2]</div>
<div style="position:absolute;left:1197.2px;top:657.57px;font-size:17.1px;line-height:21px;font-weight:400;color:#4b5a63;white-space:nowrap;">Website Co...</div>
<div style="position:absolute;left:1347.3px;top:643.00px;font-size:20.2px;line-height:25px;font-weight:400;color:#039a58;white-space:nowrap;">$719.27</div>
<div style="position:absolute;right:419.5px;top:630.10px;font-size:20.2px;line-height:25px;font-weight:400;color:#039a58;white-space:nowrap;text-decoration:underline dotted;text-underline-offset:2px;text-decoration-thickness:1.5px;">$6.54</div>
<div style="position:absolute;right:392px;top:637.00px;font-size:13px;line-height:16px;font-weight:400;color:#0b1f2b;white-space:nowrap;">[2]</div>
<div style="position:absolute;left:1497.6px;top:657.57px;font-size:17.1px;line-height:21px;font-weight:400;color:#4b5a63;white-space:nowrap;">Website Co...</div>
<div style="position:absolute;left:1646px;top:643.00px;font-size:20.2px;line-height:25px;font-weight:400;color:#0b1f2b;white-space:nowrap;letter-spacing:0.25px;">May 7, 2025 – Ongoing</div>
<div style="position:absolute;left:25.2px;top:706.00px;font-size:20.2px;line-height:25px;font-weight:400;color:#0b6cbf;white-space:nowrap;letter-spacing:-1.0px;">TOTO-CR</div>
<div style="position:absolute;left:227.7px;top:706.00px;font-size:20.2px;line-height:25px;font-weight:400;color:#0b1f2b;white-space:nowrap;">All</div>
<div style="position:absolute;left:390px;top:701.8px;width:9px;height:9px;box-sizing:border-box;background:#c6cdd5;border-radius:50%;"></div>
<div style="position:absolute;left:411.7px;top:692.80px;font-size:20.2px;line-height:25px;font-weight:400;color:#0b1f2b;white-space:nowrap;">Deleted</div>
<div style="position:absolute;left:411.7px;top:720.01px;font-size:17.3px;line-height:22px;font-weight:400;color:#0b1f2b;white-space:nowrap;">Campaign</div>
<div style="position:absolute;left:597.3px;top:706.00px;font-size:20.2px;line-height:25px;font-weight:400;color:#0b1f2b;white-space:nowrap;">40,998</div>
<div style="position:absolute;left:747.3px;top:706.00px;font-size:20.2px;line-height:25px;font-weight:400;color:#0b1f2b;white-space:nowrap;">41,796</div>
<div style="position:absolute;left:897.3px;top:706.00px;font-size:20.2px;line-height:25px;font-weight:400;color:#0b1f2b;white-space:nowrap;">1.02</div>
<div style="position:absolute;left:1047.3px;top:706.00px;font-size:20.2px;line-height:25px;font-weight:400;color:#0b1f2b;white-space:nowrap;letter-spacing:0.3px;">7-day clic...</div>
<div style="position:absolute;left:1197.3px;top:706.00px;font-size:20.2px;line-height:25px;font-weight:400;color:#0b1f2b;white-space:nowrap;">—</div>
<div style="position:absolute;left:1347.3px;top:706.00px;font-size:20.2px;line-height:25px;font-weight:400;color:#039a58;white-space:nowrap;">$339.08</div>
<div style="position:absolute;left:1497.3px;top:706.00px;font-size:20.2px;line-height:25px;font-weight:400;color:#0b1f2b;white-space:nowrap;">—</div>
<div style="position:absolute;left:1647.3px;top:706.00px;font-size:20.2px;line-height:25px;font-weight:400;color:#0b1f2b;white-space:nowrap;">—</div>
<div style="position:absolute;left:227.7px;top:769.00px;font-size:20.2px;line-height:25px;font-weight:400;color:#0b6cbf;white-space:nowrap;letter-spacing:-1.0px;">TOTO-CR</div>
<div style="position:absolute;left:390px;top:764.8px;width:9px;height:9px;box-sizing:border-box;background:#c6cdd5;border-radius:50%;"></div>
<div style="position:absolute;left:411.7px;top:755.80px;font-size:20.2px;line-height:25px;font-weight:400;color:#0b1f2b;white-space:nowrap;">Deleted</div>
<div style="position:absolute;left:411.7px;top:783.01px;font-size:17.3px;line-height:22px;font-weight:400;color:#0b1f2b;white-space:nowrap;">Ad set</div>
<div style="position:absolute;left:597.3px;top:769.00px;font-size:20.2px;line-height:25px;font-weight:400;color:#0b1f2b;white-space:nowrap;">40,998</div>
<div style="position:absolute;left:747.3px;top:769.00px;font-size:20.2px;line-height:25px;font-weight:400;color:#0b1f2b;white-space:nowrap;">41,796</div>
<div style="position:absolute;left:897.3px;top:769.00px;font-size:20.2px;line-height:25px;font-weight:400;color:#0b1f2b;white-space:nowrap;">1.02</div>
<div style="position:absolute;left:1047.3px;top:769.00px;font-size:20.2px;line-height:25px;font-weight:400;color:#0b1f2b;white-space:nowrap;letter-spacing:0.3px;">7-day clic...</div>
<div style="position:absolute;right:719.8px;top:756.10px;font-size:20.2px;line-height:25px;font-weight:400;color:#0b1f2b;white-space:nowrap;text-decoration:underline dotted;text-underline-offset:2px;text-decoration-thickness:1.5px;">30</div>
<div style="position:absolute;right:691.8px;top:763.00px;font-size:13px;line-height:16px;font-weight:400;color:#0b1f2b;white-space:nowrap;">[2]</div>
<div style="position:absolute;left:1197.2px;top:783.57px;font-size:17.1px;line-height:21px;font-weight:400;color:#4b5a63;white-space:nowrap;">Website Co...</div>
<div style="position:absolute;left:1347.3px;top:769.00px;font-size:20.2px;line-height:25px;font-weight:400;color:#039a58;white-space:nowrap;">$339.08</div>
<div style="position:absolute;right:419.5px;top:756.10px;font-size:20.2px;line-height:25px;font-weight:400;color:#039a58;white-space:nowrap;text-decoration:underline dotted;text-underline-offset:2px;text-decoration-thickness:1.5px;">$11.30</div>
<div style="position:absolute;right:392px;top:763.00px;font-size:13px;line-height:16px;font-weight:400;color:#0b1f2b;white-space:nowrap;">[2]</div>
<div style="position:absolute;left:1497.6px;top:783.57px;font-size:17.1px;line-height:21px;font-weight:400;color:#4b5a63;white-space:nowrap;">Website Co...</div>
<div style="position:absolute;left:1646px;top:769.00px;font-size:20.2px;line-height:25px;font-weight:400;color:#0b1f2b;white-space:nowrap;letter-spacing:0.25px;">May 7, 2025 – Ongoing</div>
<div style="position:absolute;left:25.2px;top:826.50px;font-size:20.2px;line-height:25px;font-weight:700;color:#0b1f2b;white-space:nowrap;">Total results</div>
<div style="position:absolute;left:25.2px;top:854.13px;font-size:17.8px;line-height:22px;font-weight:400;color:#4b5a63;white-space:nowrap;">6 / 6 rows displayed</div>
<div style="position:absolute;right:1284.3px;top:824.90px;font-size:20.2px;line-height:25px;font-weight:400;color:#0b1f2b;white-space:nowrap;">211,458</div>
<div style="position:absolute;left:594.6px;top:854.91px;font-size:17px;line-height:21px;font-weight:400;color:#4b5a63;white-space:nowrap;">Accounts Cen...</div>
<div style="position:absolute;right:1134px;top:824.90px;font-size:20.2px;line-height:25px;font-weight:400;color:#0b1f2b;white-space:nowrap;">227,372</div>
<div style="position:absolute;right:1134px;top:854.31px;font-size:17.3px;line-height:22px;font-weight:400;color:#4b5a63;white-space:nowrap;">Total</div>
<div style="position:absolute;right:984.3px;top:824.90px;font-size:20.2px;line-height:25px;font-weight:400;color:#0b1f2b;white-space:nowrap;">1.08</div>
<div style="position:absolute;left:894.6px;top:854.91px;font-size:17px;line-height:21px;font-weight:400;color:#4b5a63;white-space:nowrap;">Per Accounts ...</div>
<div style="position:absolute;left:1047.7px;top:839.00px;font-size:20.2px;line-height:25px;font-weight:700;color:#0b1f2b;white-space:nowrap;">7-day clic...</div>
<div style="position:absolute;right:691.5999999999999px;top:824.90px;font-size:20.2px;line-height:25px;font-weight:400;color:#0b1f2b;white-space:nowrap;">—</div>
<div style="position:absolute;right:691.5999999999999px;top:854.31px;font-size:17.3px;line-height:22px;font-weight:400;color:#4b5a63;white-space:nowrap;">Lead</div>
<div style="position:absolute;right:535px;top:824.90px;font-size:20.2px;line-height:25px;font-weight:400;color:#039a58;white-space:nowrap;">$1,789.33</div>
<div style="position:absolute;right:534px;top:854.31px;font-size:17.3px;line-height:22px;font-weight:400;color:#4b5a63;white-space:nowrap;">Total spent</div>
<div style="position:absolute;right:391.5999999999999px;top:824.90px;font-size:20.2px;line-height:25px;font-weight:400;color:#0b1f2b;white-space:nowrap;">—</div>
<div style="position:absolute;right:391.5999999999999px;top:854.31px;font-size:17.3px;line-height:22px;font-weight:400;color:#4b5a63;white-space:nowrap;">Lead</div>
<div style="position:absolute;left:1647.4px;top:839.00px;font-size:20.2px;line-height:25px;font-weight:400;color:#0b1f2b;white-space:nowrap;">—</div>
</body></html>
